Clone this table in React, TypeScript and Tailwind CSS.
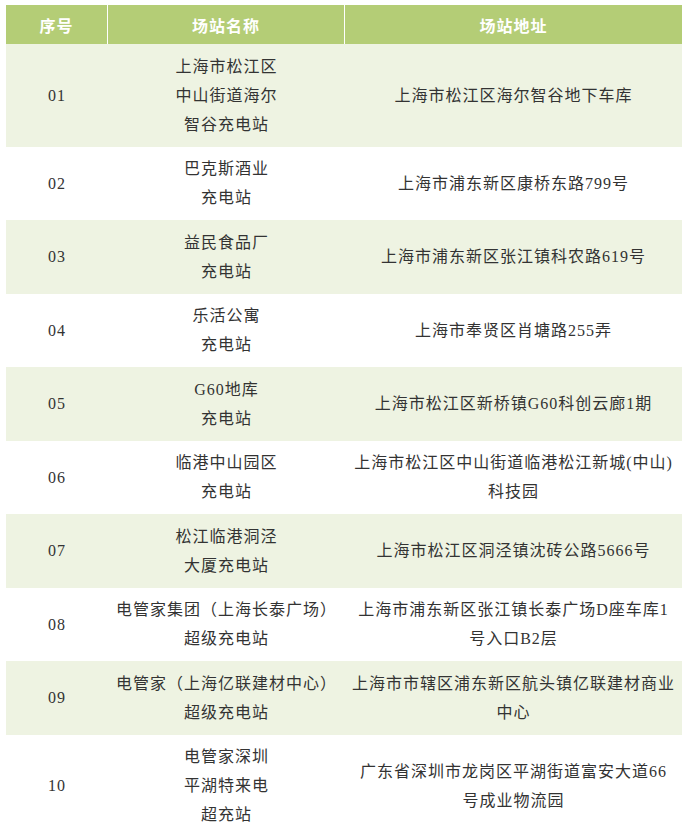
import React from "react";

type Row = { no: string; name: string[]; addr: string[] };

const rows: Row[] = [
  { no: "01", name: ["上海市松江区", "中山街道海尔", "智谷充电站"], addr: ["上海市松江区海尔智谷地下车库"] },
  { no: "02", name: ["巴克斯酒业", "充电站"], addr: ["上海市浦东新区康桥东路799号"] },
  { no: "03", name: ["益民食品厂", "充电站"], addr: ["上海市浦东新区张江镇科农路619号"] },
  { no: "04", name: ["乐活公寓", "充电站"], addr: ["上海市奉贤区肖塘路255弄"] },
  { no: "05", name: ["G60地库", "充电站"], addr: ["上海市松江区新桥镇G60科创云廊1期"] },
  { no: "06", name: ["临港中山园区", "充电站"], addr: ["上海市松江区中山街道临港松江新城(中山)", "科技园"] },
  { no: "07", name: ["松江临港洞泾", "大厦充电站"], addr: ["上海市松江区洞泾镇沈砖公路5666号"] },
  { no: "08", name: ["电管家集团（上海长泰广场）", "超级充电站"], addr: ["上海市浦东新区张江镇长泰广场D座车库1", "号入口B2层"] },
  { no: "09", name: ["电管家（上海亿联建材中心）", "超级充电站"], addr: ["上海市市辖区浦东新区航头镇亿联建材商业", "中心"] },
  { no: "10", name: ["电管家深圳", "平湖特来电", "超充站"], addr: ["广东省深圳市龙岗区平湖街道富安大道66", "号成业物流园"] },
];

const font = { fontFamily: '"Liberation Serif", "Noto Sans CJK SC", serif' };

export default function App() {
  return (
    <div className="w-[690px] min-h-[834px] bg-white pt-[5px] pl-[6px]" style={font}>
      <div className="w-[676px]">
        <div className="grid grid-cols-[102px_237px_337px] h-[39px] bg-[#b4cd76] text-white font-bold text-[16px] tracking-[1px]">
          <div className="flex items-center justify-center border-r border-white" style={{ fontFamily: '"Noto Sans CJK SC", sans-serif' }}>序号</div>
          <div className="flex items-center justify-center border-r border-white" style={{ fontFamily: '"Noto Sans CJK SC", sans-serif' }}>场站名称</div>
          <div className="flex items-center justify-center" style={{ fontFamily: '"Noto Sans CJK SC", sans-serif' }}>场站地址</div>
        </div>
        {rows.map((r, i) => (
          <div
            key={r.no}
            className={`grid grid-cols-[102px_237px_337px] text-[16px] leading-[29px] tracking-[1px] text-[#333333] py-[7.75px] ${i % 2 === 0 ? "bg-[#eef3e2]" : "bg-white"}`}
          >
            <div className="flex items-center justify-center">{r.no}</div>
            <div className="flex flex-col items-center justify-center whitespace-nowrap">
              {r.name.map((l, j) => (
                <div key={j}>{l}</div>
              ))}
            </div>
            <div className="flex flex-col items-center justify-center whitespace-nowrap">
              {r.addr.map((l, j) => (
                <div key={j}>{l}</div>
              ))}
            </div>
          </div>
        ))}
      </div>
    </div>
  );
}
